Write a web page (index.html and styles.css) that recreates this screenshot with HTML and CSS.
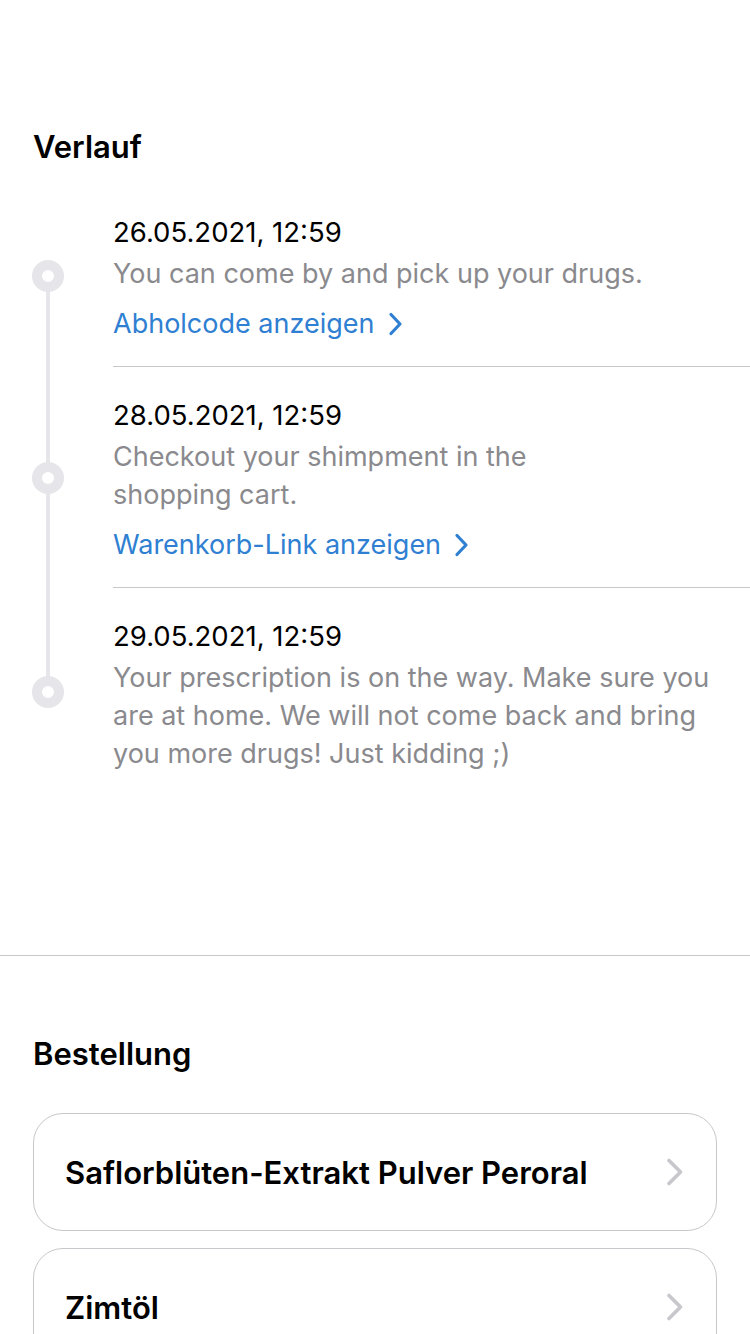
FILE: index.html
```html
<!DOCTYPE html>
<html lang="de">
<head>
<meta charset="utf-8">
<link rel="stylesheet" href="styles.css">
</head>
<body>
<section class="history">
  <h2 class="section-title">Verlauf</h2>
  <ol class="timeline">
    <li class="tl-item first">
      <div class="tl-rail"><span class="seg"></span><span class="dot"></span><span class="seg"></span></div>
      <div class="tl-body">
        <div class="tl-date">26.05.2021, 12:59</div>
        <div class="tl-desc">You can come by and pick up your drugs.</div>
        <a class="tl-link" href="#">Abholcode anzeigen<svg class="chev-blue" width="15" height="24" viewBox="0 0 15 24"><path d="M3 2.5 L12 12 L3 21.5" fill="none" stroke="currentColor" stroke-width="3.2" stroke-linecap="round" stroke-linejoin="round"/></svg></a>
      </div>
    </li>
    <li class="tl-item">
      <div class="tl-rail"><span class="seg"></span><span class="dot"></span><span class="seg"></span></div>
      <div class="tl-body">
        <div class="tl-date">28.05.2021, 12:59</div>
        <div class="tl-desc">Checkout your shimpment in the<br>shopping cart.</div>
        <a class="tl-link" href="#">Warenkorb-Link anzeigen<svg class="chev-blue" width="15" height="24" viewBox="0 0 15 24"><path d="M3 2.5 L12 12 L3 21.5" fill="none" stroke="currentColor" stroke-width="3.2" stroke-linecap="round" stroke-linejoin="round"/></svg></a>
      </div>
    </li>
    <li class="tl-item last">
      <div class="tl-rail"><span class="seg"></span><span class="dot"></span><span class="seg"></span></div>
      <div class="tl-body">
        <div class="tl-date">29.05.2021, 12:59</div>
        <div class="tl-desc">Your prescription is on the way. Make sure you<br>are at home. We will not come back and bring<br>you more drugs! Just kidding ;)</div>
      </div>
    </li>
  </ol>
</section>
<section class="order">
  <h2 class="section-title">Bestellung</h2>
  <div class="cards">
    <a class="card" href="#"><span class="card-name">Saflorblüten-Extrakt Pulver Peroral</span><svg class="chev-gray" width="18" height="28" viewBox="0 0 18 28"><path d="M3 2.5 L14.5 14 L3 25.5" fill="none" stroke="currentColor" stroke-width="3.6" stroke-linecap="round" stroke-linejoin="round"/></svg></a>
    <a class="card" href="#"><span class="card-name">Zimtöl</span><svg class="chev-gray" width="18" height="28" viewBox="0 0 18 28"><path d="M3 2.5 L14.5 14 L3 25.5" fill="none" stroke="currentColor" stroke-width="3.6" stroke-linecap="round" stroke-linejoin="round"/></svg></a>
  </div>
</section>
</body>
</html>
```
FILE: styles.css
```css
* { box-sizing: border-box; }
html, body { margin: 0; padding: 0; background: #fff; }
body {
  font-family: Inter, "Noto Sans", "Liberation Sans", sans-serif;
  color: #000;
  width: 750px;
  overflow: hidden;
}
.section-title {
  margin: 0;
  font-size: 31px;
  line-height: 36px;
  font-weight: 600;
  padding-left: 33px;
}
.history {
  padding-top: 129px;
  padding-bottom: 159px;
  border-bottom: 1px solid #c8c8cc;
}
.timeline {
  list-style: none;
  margin: 19px 0 0 0;
  padding: 0 0 0 32px;
}
.tl-item {
  display: flex;
  align-items: stretch;
}
.tl-rail {
  width: 32px;
  flex: none;
  display: flex;
  flex-direction: column;
  align-items: center;
}
.seg {
  flex: 1;
  width: 4px;
  background: #e5e5ea;
}
.first .seg:first-child, .last .seg:last-child { background: transparent; }
.dot {
  flex: none;
  width: 32px;
  height: 32px;
  border-radius: 50%;
  border: 10px solid #e5e5ea;
  background: #fff;
}
.tl-body {
  flex: 1;
  margin-left: 49px;
  padding: 29px 20px 23px 0;
  border-bottom: 1px solid #c8c8cc;
}
.last .tl-body { border-bottom: none; }
.tl-date {
  font-size: 27.5px;
  line-height: 38px;
  color: #000;
}
.tl-desc {
  margin-top: 4px;
  font-size: 27px;
  line-height: 38px;
  color: #8a8a8e;
}
.tl-link {
  display: inline-flex;
  align-items: center;
  margin-top: 12px;
  font-size: 27px;
  line-height: 38px;
  color: #2f80d2;
  text-decoration: none;
}
.chev-blue { margin-left: 13px; color: #2f80d2; }
.order {
  padding-top: 80px;
}
.cards {
  margin-top: 41px;
  padding: 0 33px;
  display: flex;
  flex-direction: column;
  gap: 17px;
}
.card {
  display: flex;
  align-items: center;
  justify-content: space-between;
  height: 118px;
  border: 1px solid #c8c8cc;
  border-radius: 30px;
  padding: 0 32px 0 31px;
  color: #000;
  text-decoration: none;
}
.card-name {
  font-size: 31px;
  font-weight: 600;
}
.chev-gray { color: #c7c7cc; flex: none; }
```
